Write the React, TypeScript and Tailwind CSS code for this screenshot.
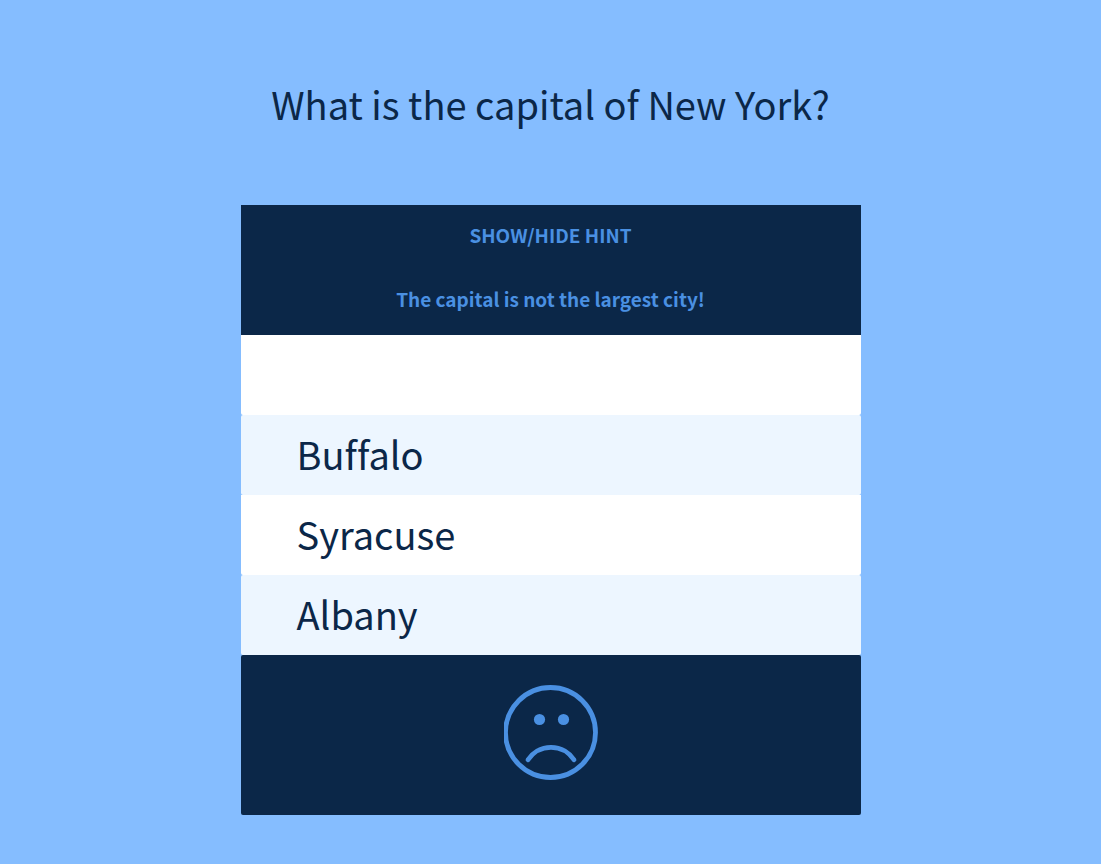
import { useState } from "react";

type Answer = { id: number; label: string };

const question = "What is the capital of New York?";
const hint = "The capital is not the largest city!";
const correctId = 3;
const answers: Answer[] = [
  { id: 0, label: "" },
  { id: 1, label: "Buffalo" },
  { id: 2, label: "Syracuse" },
  { id: 3, label: "Albany" },
];

function Face({ happy }: { happy: boolean }) {
  return (
    <svg
      viewBox="0 0 94 95"
      role="img"
      aria-label={happy ? "Correct" : "Incorrect"}
      className="block h-[95px] w-[94px] fill-none stroke-[#4a90e2]"
    >
      <circle cx="46.5" cy="47.5" r="45" strokeWidth="4.8" />
      <circle cx="35.5" cy="34.5" r="5.6" className="fill-[#4a90e2] stroke-none" />
      <circle cx="59.5" cy="34.5" r="5.6" className="fill-[#4a90e2] stroke-none" />
      <path
        d={happy ? "M24 62 A27.5 27.5 0 0 0 70 62" : "M24 74.8 A27.5 27.5 0 0 1 70 74.8"}
        strokeWidth="4.8"
        strokeLinecap="round"
      />
    </svg>
  );
}

export default function App() {
  const [hintOpen, setHintOpen] = useState(true);
  const [picked, setPicked] = useState(0);

  return (
    <main className="flex min-h-screen flex-col items-center bg-[#85bdff] px-4 pb-12 font-['Noto_Sans_CJK_SC','Noto_Sans',sans-serif] text-[#0b2748] [font-variant-ligatures:none]">
      <h1 className="pt-[77px] pb-[75px] text-center text-[38px] leading-[53px]">{question}</h1>
      <section className="w-full max-w-[620px]">
        <div className="flex flex-col bg-[#0b2748] text-center text-[19px] leading-7 font-bold text-[#4a90e2]">
          <button
            type="button"
            aria-expanded={hintOpen}
            onClick={() => setHintOpen(!hintOpen)}
            className="cursor-pointer pt-4 pb-5 uppercase"
          >
            Show/Hide Hint
          </button>
          {hintOpen && <p className="px-4 pt-4 pb-[22px]">{hint}</p>}
        </div>
        <ul>
          {answers.map((answer) => (
            <li
              key={answer.id}
              className="h-20 rounded-b-[2px] bg-white even:rounded-[2px] even:bg-[#edf6ff]"
            >
              {answer.label && (
                <button
                  type="button"
                  onClick={() => setPicked(answer.id)}
                  className="h-full w-full cursor-pointer px-14 pb-1 text-left text-[38px] leading-[53px]"
                >
                  {answer.label}
                </button>
              )}
            </li>
          ))}
        </ul>
        <div className="flex h-40 justify-center rounded-[2px] bg-[#0b2748] pt-[30px]">
          <Face happy={picked === correctId} />
        </div>
      </section>
    </main>
  );
}
